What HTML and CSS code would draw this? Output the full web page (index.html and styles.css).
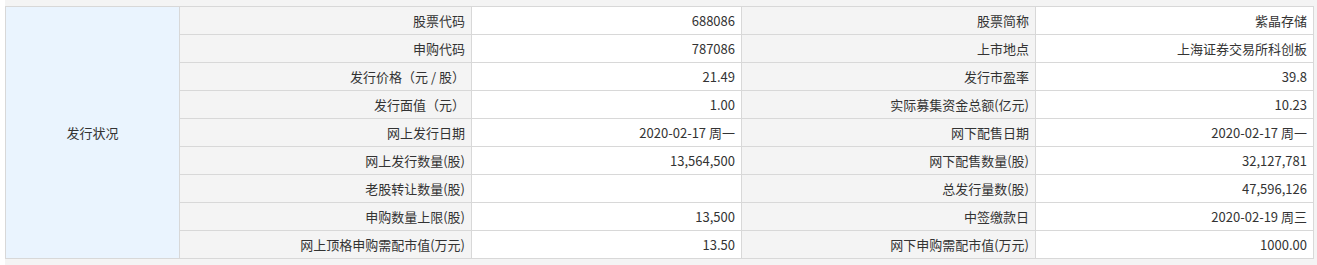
FILE: index.html
```html
<!DOCTYPE html>
<html lang="zh-CN">
<head>
<meta charset="utf-8">
<link rel="stylesheet" href="styles.css">
</head>
<body>
<div class="wrap">
<table class="info">
  <colgroup>
    <col class="c-title"><col class="c-l1"><col class="c-v1"><col class="c-l2"><col class="c-v2">
  </colgroup>
  <tbody>
    <tr><td class="title" rowspan="9">发行状况</td><td class="lbl">股票代码</td><td class="val">688086</td><td class="lbl">股票简称</td><td class="val">紫晶存储</td></tr>
    <tr><td class="lbl">申购代码</td><td class="val">787086</td><td class="lbl">上市地点</td><td class="val">上海证券交易所科创板</td></tr>
    <tr><td class="lbl">发行价格（元 / 股）</td><td class="val">21.49</td><td class="lbl">发行市盈率</td><td class="val">39.8</td></tr>
    <tr><td class="lbl">发行面值（元）</td><td class="val">1.00</td><td class="lbl">实际募集资金总额(亿元)</td><td class="val">10.23</td></tr>
    <tr><td class="lbl">网上发行日期</td><td class="val">2020-02-17 周一</td><td class="lbl">网下配售日期</td><td class="val">2020-02-17 周一</td></tr>
    <tr><td class="lbl">网上发行数量(股)</td><td class="val">13,564,500</td><td class="lbl">网下配售数量(股)</td><td class="val">32,127,781</td></tr>
    <tr><td class="lbl">老股转让数量(股)</td><td class="val"></td><td class="lbl">总发行量数(股)</td><td class="val">47,596,126</td></tr>
    <tr><td class="lbl">申购数量上限(股)</td><td class="val">13,500</td><td class="lbl">中签缴款日</td><td class="val">2020-02-19 周三</td></tr>
    <tr><td class="lbl">网上顶格申购需配市值(万元)</td><td class="val">13.50</td><td class="lbl">网下申购需配市值(万元)</td><td class="val">1000.00</td></tr>
  </tbody>
</table>
</div>
</body>
</html>
```
FILE: styles.css
```css
html, body {
  margin: 0;
  padding: 0;
  background: #ffffff;
}
body {
  font-family: "Noto Sans CJK SC", "Noto Sans", sans-serif;
  font-size: 13px;
  color: #333333;
}
.wrap {
  margin-left: 5px;
  padding: 6px 0 7px 0;
  background: #f4f4f4;
}
.info {
  border-collapse: collapse;
  table-layout: fixed;
  width: 1308px;
}
.c-title { width: 174px; }
.c-l1 { width: 292px; }
.c-v1 { width: 270px; }
.c-l2 { width: 294px; }
.c-v2 { width: 278px; }
.info td {
  border: 1px solid #d8d8d8;
  height: 28px;
  padding: 0 6px 0 6px;
  text-align: right;
  line-height: 16px;
  white-space: nowrap;
  box-sizing: border-box;
}
.info td.title {
  background: #eaf4fe;
  text-align: center;
}
.info td.lbl {
  background: #f4f4f4;
}
.info td.val {
  background: #ffffff;
}
```
